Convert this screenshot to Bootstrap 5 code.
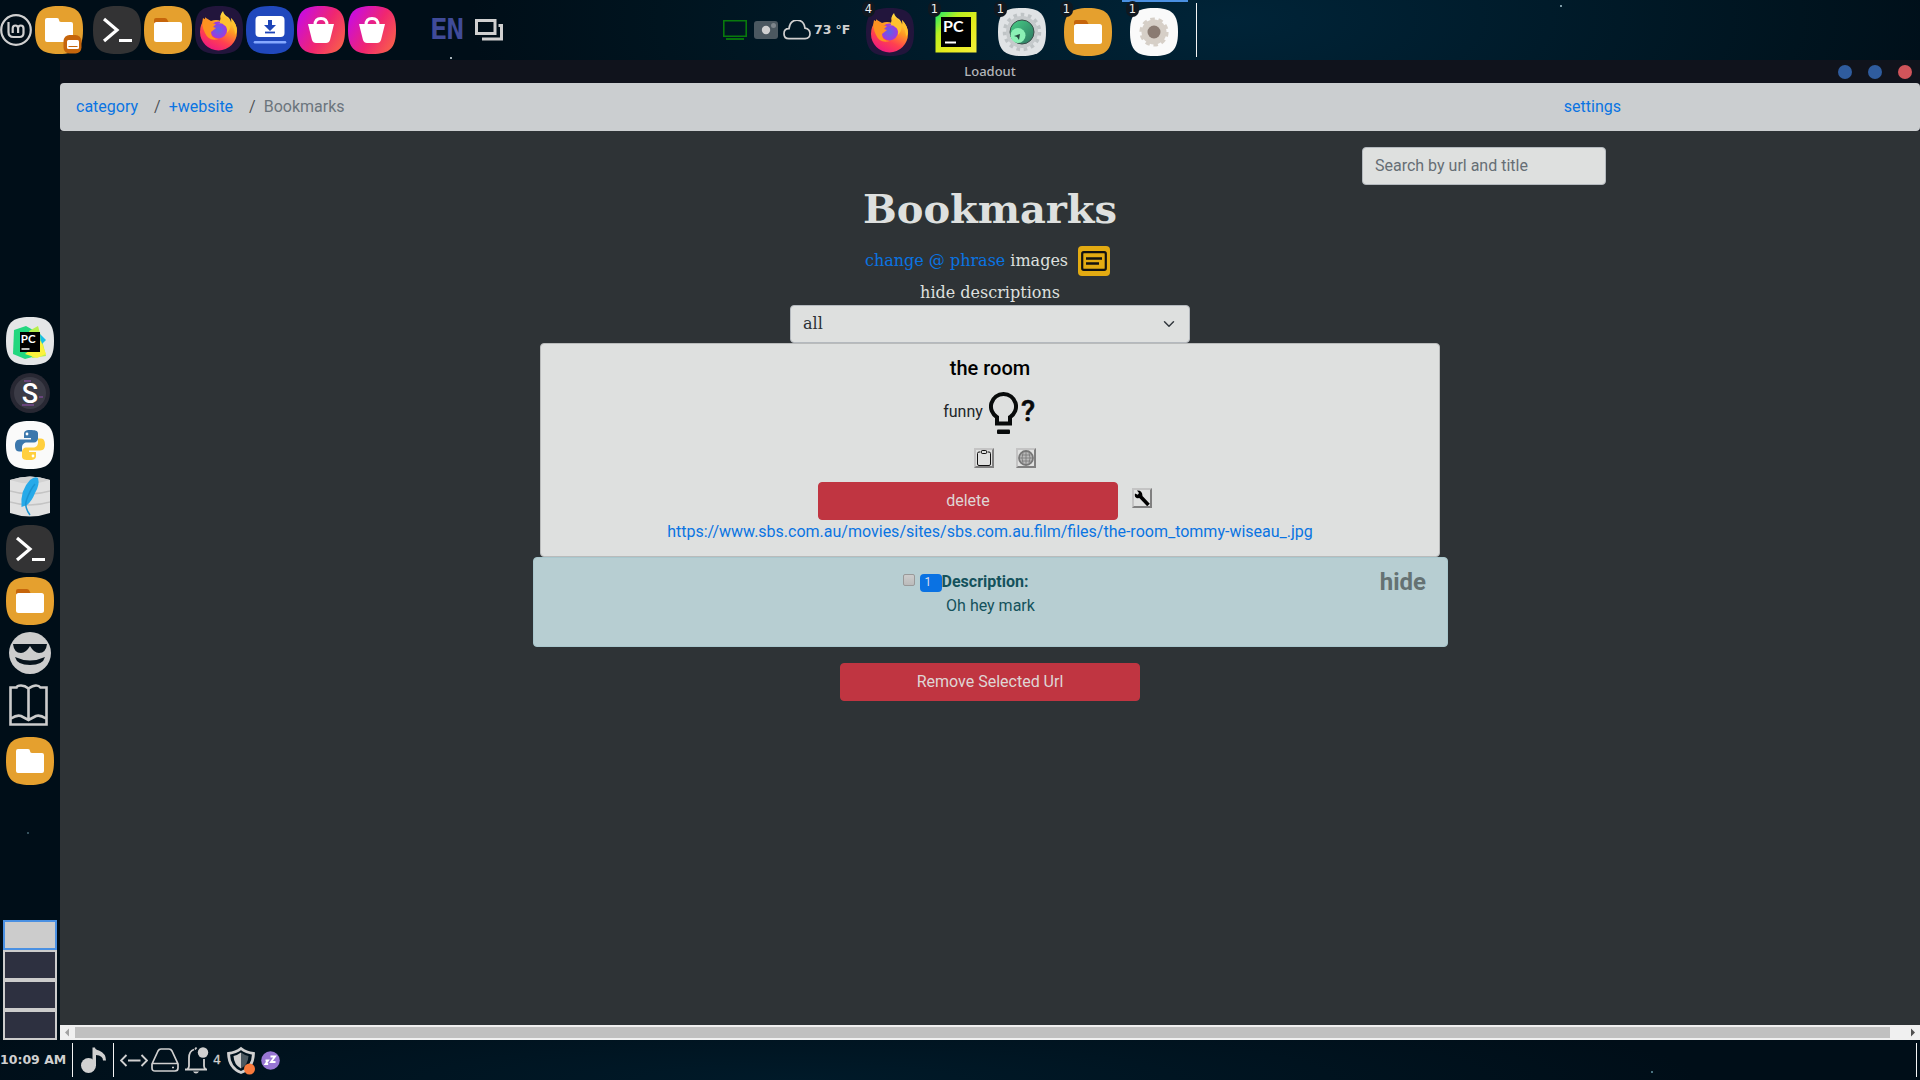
<!DOCTYPE html>
<html lang="en">
<head>
<meta charset="utf-8">
<title>Loadout</title>
<link href="https://cdn.jsdelivr.net/npm/bootstrap@5.3.0/dist/css/bootstrap.min.css" rel="stylesheet">
<style>
body{width:1920px;height:1080px;overflow:hidden;font-family:Roboto,"Liberation Sans",sans-serif;color:#212529}
svg{display:block;flex:none}
.desktop{height:1080px;background:
  radial-gradient(circle at 451px 58px,#a8b4ba 0 1px,transparent 1.5px),
  radial-gradient(circle at 1561px 6px,#7d9aa6 0 1px,transparent 1.5px),
  radial-gradient(circle at 1652px 1072px,#4a7482 0 1px,transparent 1.5px),
  radial-gradient(circle at 28px 833px,#34505c 0 1px,transparent 1.5px),
  radial-gradient(ellipse 760px 260px at 1230px 20px,#002438,#00141f 75%,rgba(0,14,23,0) 100%),
  radial-gradient(ellipse 900px 90px at 800px 1080px,#001a29,#000e18)}
.panel-top{height:60px}
.panel-bottom{height:40px}
.sidebar{width:60px}
.panel-text{font:bold 12.5px/16px "DejaVu Sans",sans-serif;color:#d0d0d0;white-space:nowrap}
.divider{width:1px;background:#f4f4f4;flex:none}
.lang{font:bold 29px/34px "DejaVu Sans Mono",monospace;color:#404b99;letter-spacing:-1px;width:43px}
.task{width:66px;padding-top:8px;height:60px}
.task.active{box-shadow:inset 0 2px #4a90e2}
.count{left:4px;top:1px;width:13px;height:16px;border-radius:7px;background:#101820;color:#eee;font:11.5px/16px "DejaVu Sans",sans-serif;text-align:center}
.win{width:1860px}
.titlebar{height:23px;background:#10131c;color:#b4b6ba;font:500 13px/25px "Noto Sans",sans-serif}
.dot{width:14px;height:14px;border-radius:50%;background:#2f5c9e}
.dot-close{background:#d0545a}
.page{background:#2e3336}
.crumbs{height:48px;background:#cbced0;border-radius:4px;margin:0;padding:12px 0 12px 16px;--bs-breadcrumb-divider-color:#6c757d}
.crumbs .breadcrumb-item+.breadcrumb-item{padding-left:16px;color:#6c757d}
.page a{color:#0a74e2;text-decoration:none}
.search{width:244px;height:38px;background:#dee0df;border-color:#b4b9be;border-radius:4px;padding-top:5px;padding-bottom:7px}
.search::placeholder{color:#666e75}
.serif{font-family:"DejaVu Serif",serif;color:#dee0df}
.headline{font-size:40px;line-height:48px;font-weight:700;letter-spacing:-.05px}
.links-row{height:40px}
.btn-note{width:32px;height:30px;background:#e3ab12;border-radius:4px;margin-left:11px;margin-right:5px}
.picker{width:400px;height:38px;background-color:#dee0df;border-color:#b4b9be;border-radius:4px;color:#2b3035;font-family:"DejaVu Serif",serif;font-size:16px}
.entry{width:900px;height:214px;background:#dee0df;border-color:#b9bbbb;border-radius:4px;padding-top:12px}
.idea{height:50px;gap:6px}
.tool{width:20px;height:20px;border:2px solid;border-color:#c4c4c4 #808080 #808080 #c4c4c4;background:#e0e1e0;padding:0}
.btn-red{width:300px;height:38px;background:#c03541;border-color:#c03541;color:#dfd5d5;border-radius:4px}
.desc{width:915px;height:90px;background:#b7ced2;border:1px solid #a8c7cd;border-radius:4px;color:#14525c;padding:8px 16px 0;margin:0 0 16px 1px}
.desc input{width:12px;height:12px;appearance:none;border:1px solid #999;border-radius:2px;background:linear-gradient(#ccc,#bbb)}
.num{width:22px;height:18px;background:#0a72e3;border-radius:4px;font-weight:400;font-size:12px;line-height:17px;padding:0 0 0 5px;text-align:left;color:#dde}
.hide-x{right:21px;top:12px;font-size:24px;line-height:24px;font-weight:700;color:#657273}
.scroller{height:15px;background:#f0f0f0}
.thumb{width:1815px;height:11px;background:#c0c0c0}
.ws{width:54px;height:30px;border:2px solid #ccc;background:#2d3040}
.ws.on{background:#ccc;border-color:#4a90e2}
</style>
<script src="https://cdn.jsdelivr.net/npm/bootstrap@5.3.0/dist/js/bootstrap.bundle.min.js"></script>
</head>
<body>
<svg width="0" height="0" class="position-absolute">
<defs>
<linearGradient id="pink" x1="0" y1=".2" x2="1" y2=".8"><stop offset="0" stop-color="#c70be6"/><stop offset=".55" stop-color="#f02670"/><stop offset="1" stop-color="#f8604a"/></linearGradient>
<linearGradient id="fox" x1=".8" y1="0" x2=".3" y2="1"><stop offset="0" stop-color="#fff04a"/><stop offset=".4" stop-color="#ff9a22"/><stop offset=".7" stop-color="#ff4050"/><stop offset="1" stop-color="#ee1784"/></linearGradient>
<radialGradient id="violet"><stop offset="0" stop-color="#5a64e8"/><stop offset="1" stop-color="#a337dd"/></radialGradient>
<linearGradient id="pcg" x1="0" y1="0" x2="1" y2="1"><stop offset="0" stop-color="#14e86a"/><stop offset=".3" stop-color="#b8f020"/><stop offset=".6" stop-color="#e6ec1c"/><stop offset="1" stop-color="#f4f03a"/></linearGradient>
<linearGradient id="grn" x1="0" y1="0" x2="1" y2="1"><stop offset="0" stop-color="#48d086"/><stop offset="1" stop-color="#2c7460"/></linearGradient>
<symbol id="sq" viewBox="0 0 48 48"><path d="M24 0C42 0 48 6 48 24S42 48 24 48 0 42 0 24 6 0 24 0Z"/></symbol>
<symbol id="folder" viewBox="0 0 48 48"><use href="#sq" fill="#e5a02e"/><path d="M10 17v-3q0-2 2-2h9q2 0 3 3l1 2Z" fill="#c6650b"/><rect x="10" y="16" width="28" height="20" rx="2.500" fill="#fff"/></symbol>
<symbol id="home" viewBox="0 0 48 48"><use href="#sq" fill="#e5a02e"/><path d="M10 14q0-2 2-2h10q2 0 2 2 0 2 2 2h10q2 0 2 2v16q0 2-2 2H12q-2 0-2-2Z" fill="#fff"/></symbol>
<symbol id="term" viewBox="0 0 48 48"><use href="#sq" fill="#333334"/><path d="m11 13 13 11-13 11" fill="none" stroke="#fff" stroke-width="3.200"/><path d="M26 34.500h13" stroke="#fff" stroke-width="3"/></symbol>
<symbol id="firefox" viewBox="0 0 48 48"><use href="#sq" fill="#22153c"/><path d="M28 5q1 4 5 6c2 2 3 4 3 6q1-2 0-5 6 6 6 14a18.500 18.500 0 0 1-37 0q0-8 5-13 0-3 1-1l5 3q5-2 10 0-2-6 2-10Z" fill="url(#fox)"/><circle cx="23.500" cy="24" r="8.500" fill="url(#violet)"/><path d="m8 12 8 5 5 1-3 3 3 1-5 4q0 7 8 7-10 3-14-6-4-8-2-15Z" fill="#ff9220"/><path d="M22 18q5-2 7 1 4 2 3 8 5-5 3-11 5 6 5 13l2-4q0-7-6-13 1 4 0 5Q34 12 29 10q-5 3-4 7Z" fill="#ffc12e"/></symbol>
<symbol id="down" viewBox="0 0 48 48"><use href="#sq" fill="#2048bd"/><rect x="9.500" y="10" width="29" height="21" rx="4" fill="#fff"/><path d="M22 14h4v5h4l-6 6-6-6h4Z" fill="#1d45b8"/><path d="M19 26.500h10" stroke="#1d45b8" stroke-width="1.800"/><path d="M9 36.300h30" stroke="#86a9ff" stroke-width="2.600" stroke-linecap="round"/></symbol>
<symbol id="bag" viewBox="0 0 48 48"><use href="#sq" fill="url(#pink)"/><path d="M11 18h26l-4 16q-1 3-4 3H19q-3 0-4-3Z" fill="#fff"/><path d="M18 19q0-6.500 6-6.500t6 6.500" fill="none" stroke="#fff" stroke-width="3"/></symbol>
<symbol id="webgear" viewBox="0 0 48 48"><use href="#sq" fill="#e0e3e5"/><circle cx="24" cy="24" r="16" fill="#c6cacc"/><circle cx="24" cy="24" r="17.500" fill="none" stroke="#bfc4c6" stroke-width="3.500" stroke-dasharray="3.600 3.730"/><circle cx="24" cy="24" r="12" fill="url(#grn)" stroke="#3a4b48"/><circle cx="20" cy="27.500" r="7.500" fill="#8bf0b5"/><path d="m16 28 6-2-1 6-2-3Z" fill="#24493e"/></symbol>
<symbol id="gear" viewBox="0 0 48 48"><use href="#sq" fill="#fafafa"/><circle cx="24" cy="24" r="12.500" fill="#d6cfc7"/><circle cx="24" cy="24" r="13" fill="none" stroke="#d6cfc7" stroke-width="3.200" stroke-dasharray="4.500 3.668"/><circle cx="24" cy="24" r="6.500" fill="#8a7b72"/></symbol>
</defs>
</svg>
<div class="desktop d-flex flex-column">
  <header class="panel-top d-flex flex-shrink-0">
    <div class="d-flex pt-1" style="width:720px">
      <svg class="mt-2" width="35" height="36" viewBox="0 0 35 36" fill="none" stroke="#d0d0d0"><circle cx="16" cy="18" r="14.800" stroke-width="2.200"/><path d="M8.500 10v10q0 5 5 5h6q4 0 4-4v-4.500q0-3-2.700-3t-2.700 3V21m0-4.500q0-3-2.700-3t-2.700 3V21" stroke-width="2.200"/></svg>
      <svg width="48" height="52" viewBox="0 -2 48 52"><use href="#home" width="48" height="48"/><rect x="28.500" y="29" width="18" height="18.500" rx="6" fill="#c6650b"/><rect x="32" y="34" width="12" height="9" rx="1.500" fill="#fff"/><path d="M33.500 40.500h9" stroke="#c6650b"/></svg>
      <div class="d-flex" style="margin-left:10px;gap:3px;margin-top:2px">
        <svg width="48" height="48"><use href="#term"/></svg>
        <svg width="48" height="48"><use href="#folder"/></svg>
        <svg width="48" height="48"><use href="#firefox"/></svg>
        <svg width="48" height="48"><use href="#down"/></svg>
        <svg width="48" height="48"><use href="#bag"/></svg>
        <svg width="48" height="48"><use href="#bag"/></svg>
      </div>
      <div class="lang" style="margin:8px 0 0 34px">EN</div>
      <svg style="margin:15px 0 0 2px" width="28" height="22" fill="none" stroke="#d0d0d0" stroke-width="3"><path d="M1.500 1.500h18.500v13H1.500Z"/><path d="M23.500 6.500h3v13.500H7"/></svg>
    </div>
    <div class="d-flex align-items-center" style="width:138px">
      <svg style="margin-left:3px" width="24" height="20" viewBox="0 0 24 20"><path d="M.8.800h22.400v15.400H.8Z" fill="none" stroke="#087a0c" stroke-width="1.600"/><path d="M3 19h18" stroke="#087a0c" stroke-width="1.800"/></svg>
      <svg style="margin-left:7px" width="24" height="18"><rect width="24" height="18" rx="3" fill="#4b5860"/><circle cx="12" cy="9" r="4.200" fill="#d0d0d0"/><circle cx="19.500" cy="4.500" r="2.500" fill="#7d868c"/></svg>
      <svg style="margin-left:5px" width="28" height="21" viewBox="0 0 28 21"><path d="M6 19.500q-5 0-5-5t5-5Q7 1 14 1t8 8q5 1 5 5.500t-5 5Z" fill="none" stroke="#d0d0d0" stroke-width="1.700" transform="translate(0 -.8)"/></svg>
      <span class="panel-text" style="margin-left:3px;letter-spacing:-.05px">73 °F</span>
    </div>
    <div class="d-flex">
      <div class="task position-relative"><svg class="ms-2" width="48" height="48"><use href="#firefox"/></svg><span class="count position-absolute">4</span></div>
      <div class="task position-relative"><svg class="ms-2" width="48" height="48"><rect x="3.500" y="4" width="41" height="40.500" fill="url(#pcg)"/><rect x="9" y="9" width="30" height="30" fill="#000"/><text x="11" y="24" font-family="Lato" font-weight="700" font-size="16" fill="#fff">PC</text><path d="M13 34.500h11" stroke="#fff" stroke-width="2"/></svg><span class="count position-absolute">1</span></div>
      <div class="task position-relative"><svg class="ms-2" width="48" height="48"><use href="#webgear"/></svg><span class="count position-absolute">1</span></div>
      <div class="task position-relative"><svg class="ms-2" width="48" height="48"><use href="#folder"/></svg><span class="count position-absolute">1</span></div>
      <div class="task active position-relative"><svg class="ms-2" width="48" height="48"><use href="#gear"/></svg><span class="count position-absolute">1</span></div>
      <div class="divider" style="margin:3px 0 3px 8px"></div>
    </div>
  </header>

  <div class="d-flex flex-grow-1">
    <aside class="sidebar d-flex flex-column justify-content-between">
      <div class="d-flex flex-column align-items-center" style="padding-top:257px">
        <svg width="48" height="48"><use href="#sq" fill="#e4e6e7"/><path d="m8 13 12-4 14 8-4 22-11 3-12-5Z" fill="#22d77f"/><path d="m23 14 9-5 4 14 4 16-14 2Z" fill="#b8f04a"/><path d="m34 17 6 6-5 5Z" fill="#18bfe6"/><path d="m35 24 5 13-9 4-12-4Z" fill="#fbf23c"/><rect x="14" y="15" width="20" height="20"/><text x="14.800" y="26" font-family="Lato" font-weight="700" font-size="11.500" fill="#fff">PC</text><path d="M15.500 32h8" stroke="#fff" stroke-width="1.500"/></svg>
        <svg style="margin-top:8px" width="40" height="40"><circle cx="20" cy="20" r="20" fill="#282833"/><circle cx="20" cy="20" r="16" fill="#3b3b46"/><path d="M14 8h7M29 24h4M12 32h12" stroke="#69457c" stroke-width="2"/><text x="20" y="30" text-anchor="middle" font-family="Roboto" font-weight="500" font-size="27" fill="#fff">S</text></svg>
        <svg style="margin-top:8px" width="48" height="48"><use href="#sq" fill="#fafafa"/><path d="M24 9c-5 0-6 2-6 4v4h7v1.500H14c-4 0-5 3-5 6s1 6 4 6h3v-4c0-3 2-5 5-5h7c2 0 4-2 4-4v-5c0-3-3-3.500-8-3.500Z" fill="#3c78ad"/><circle cx="21" cy="13" r="1.400" fill="#fff"/><path d="M24 39c5 0 6-2 6-4v-4h-7v-1.500h11c4 0 5-3 5-6s-1-6-4-6h-3v4c0 3-2 5-5 5h-7c-2 0-4 2-4 4v5c0 3 3 3.500 8 3.500Z" fill="#ffcf3e"/><circle cx="27" cy="35" r="1.400" fill="#fff"/></svg>
        <svg style="margin-top:7px" width="40" height="41"><path d="M0 4Q20-3 40 4v33q-20 7-40 0Z" fill="#e1e1e1"/><path d="M0 4q20-7 40 0-20 7-40 0Z" fill="#d2d2d2"/><path d="M0 15q20 6 40 0M0 26q20 6 40 0" fill="none" stroke="#c4c4c4" stroke-width="1.500"/><path d="M11.500 31Q10 14 20 4q5-4 8-2 2 7-3 15-3 8-8 12Z" fill="#27aae9"/><path d="M20 39Q14 31 16.500 24 20 14 25 8" fill="none" stroke="#1c94d2" stroke-width="1.500"/></svg>
        <svg style="margin-top:8px" width="48" height="48"><use href="#term"/></svg>
        <svg style="margin-top:4px" width="48" height="48"><use href="#folder"/></svg>
        <svg style="margin-top:7px" width="42" height="42"><circle cx="21" cy="21" r="21" fill="#ccc"/><path d="M4 12h34q-1 9-8 9-5 0-9-7-4 7-9 7-7 0-8-9ZM6 25q15 7 30 0-2 8-15 8T6 25Z" fill="#07131c"/></svg>
        <svg style="margin:10px 3px 0 0" width="39" height="42" fill="none" stroke="#ccc" stroke-width="2.600"><path d="M19.500 4.500Q16 1.500 12 1.500T7.500 3.500H1.500v37h36v-37h-6Q30 1.500 27 1.500t-7.500 3v30M2 34.500q6-4 10-2.500l7.500 4 7.500-4q4-1.500 10 2.500"/></svg>
        <svg style="margin-top:11px" width="48" height="48"><use href="#home"/></svg>
      </div>
      <div class="d-flex flex-column align-items-center"><div class="ws on"></div><div class="ws"></div><div class="ws"></div><div class="ws"></div></div>
    </aside>

    <section class="win d-flex flex-column page">
      <div class="titlebar d-flex justify-content-end align-items-center position-relative">
        <div class="position-absolute start-0 end-0 text-center">Loadout</div>
        <div class="d-flex" style="gap:16px;margin-right:8px"><i class="dot"></i><i class="dot"></i><i class="dot dot-close"></i></div>
      </div>
      <div style="background:#10131c"><nav class="crumbs d-flex justify-content-between">
        <ol class="breadcrumb m-0">
          <li class="breadcrumb-item"><a href="#">category</a></li>
          <li class="breadcrumb-item"><a href="#">+website</a></li>
          <li class="breadcrumb-item">Bookmarks</li>
        </ol>
        <a href="#" style="margin-right:299px">settings</a>
      </nav></div>
      <main class="flex-grow-1 d-flex flex-column align-items-center pt-3">
        <div class="w-100 d-flex justify-content-end" style="padding-right:314px"><input class="form-control search" placeholder="Search by url and title"></div>
        <h1 class="serif headline mb-2">Bookmarks</h1>
        <div class="serif links-row d-flex align-items-center"><a href="#">change @ phrase</a><span style="margin-left:5px;margin-right:-1px">images</span>
          <span class="btn-note d-flex align-items-center justify-content-center"><svg width="26" height="20" fill="none" stroke="#111"><rect x="1.200" y="1.200" width="23.600" height="17.600" rx="1.500" stroke-width="2.200"/><path d="M5 7.500h16M5 12.500h13" stroke-width="2.400"/></svg></span></div>
        <div class="serif">hide descriptions</div>
        <select class="form-select picker"><option>all</option></select>
        <article class="card entry align-items-center">
          <h5 class="mb-2 text-black" style="line-height:24px">the room</h5>
          <div class="idea d-flex align-items-center"><span style="margin-top:-2px">funny</span>
            <svg width="48" height="42"><path d="M14.500 2A12.500 12.500 0 0 0 8 25.200V31.500H21V25.200A12.500 12.500 0 0 0 14.500 2Z" fill="none" stroke="#080b0b" stroke-width="4"/><rect x="8" y="37.500" width="13" height="4.500" rx="1" fill="#080b0b"/><text x="39" y="28.500" text-anchor="middle" font-family="Roboto" font-weight="500" font-size="29" fill="#080b0b" stroke="#080b0b" stroke-width=".5">?</text></svg></div>
          <div class="d-flex" style="gap:22px;margin:10px 0 14px 30px">
            <button class="tool"><svg width="16" height="16" fill="none" stroke="#111"><path d="M4.500 2H3Q1.500 2 1.500 3.500v10.500Q1.500 15.500 3 15.500h10q1.500 0 1.500-1.500V3.500Q14.500 2 13 2h-1.500"/><rect x="5.500" y=".5" width="5" height="3" rx=".7"/></svg></button>
            <button class="tool"><svg width="16" height="16" fill="none" stroke="#777"><circle cx="8" cy="8" r="7" stroke-width="1.800" fill="#bbb"/><path d="M8 2v12M2 8h12M3.500 5h9M3.500 11h9M5 3q-2 5 0 10M11 3q2 5 0 10" stroke-width=".8"/></svg></button>
          </div>
          <div class="d-flex" style="gap:14px;margin-right:10px"><button class="btn btn-danger btn-red">delete</button>
            <button class="tool" style="margin-top:6px"><svg width="16" height="16"><path d="m5.500 5.500 9 9.500" stroke="#000" stroke-width="3.600"/><path d="M3 .5 5 3 3.800 4.700 1 3.500Q0 7 3 8.300l3.500-.3 2-2.500Q8 0 3 .5Z"/></svg></button></div>
          <a href="#">https://www.sbs.com.au/movies/sites/sbs.com.au.film/files/the-room_tommy-wiseau_.jpg</a>
        </article>
        <div class="alert desc position-relative">
          <div class="d-flex justify-content-center" style="margin:9px 50px 0 0"><input type="checkbox" style="margin:-1px 5px 0 0"><span class="badge num" style="margin-top:-1px">1</span><b style="line-height:24px;margin-top:-5px">Description:</b></div>
          <div class="text-center">Oh hey mark</div>
          <div class="hide-x position-absolute">hide</div>
        </div>
        <button class="btn btn-danger btn-red">Remove Selected Url</button>
      </main>
      <div class="scroller d-flex align-items-center"><svg width="15" height="15"><path d="M5 7.500 9 3.500v8Z" fill="#a3a3a3"/></svg><div class="thumb"></div><svg class="ms-auto" width="15" height="15"><path d="M10 7.500 6 3.500v8Z" fill="#505050"/></svg></div>
    </section>
  </div>

  <footer class="panel-bottom d-flex align-items-center flex-shrink-0">
    <span class="panel-text" style="width:72px">10:09 AM</span>
    <div class="divider" style="height:34px"></div>
    <svg style="margin-left:7px" width="27" height="28"><circle cx="8.500" cy="19.500" r="7.500" fill="#d0d0d0"/><path d="M12.500 20V1.500h2.500q0 2 4 3 7 3 7 10h-3q0-5-7-5.500V20Z" fill="#d0d0d0"/></svg>
    <div class="divider" style="height:34px;margin-left:6px"></div>
    <svg style="margin-left:6px" width="28" height="13" fill="none" stroke="#d0d0d0" stroke-width="1.900"><path d="M6.500 1 1 6.500 6.500 12M21.500 1 27 6.500 21.500 12M8 6.500h12.500"/></svg>
    <svg style="margin-left:3px" width="28" height="24" fill="none" stroke="#d0d0d0" stroke-width="1.700"><path d="m1 16 6-13q1-2 3-2h8q2 0 3 2l6 13v4q0 3-3 3H4q-3 0-3-3ZM1 15.500h26"/><path d="M21 19.500h2"/></svg>
    <svg style="margin-left:5px" width="26" height="28" viewBox="0 -1 26 28"><path d="M1 22.500h22M3.500 22q1.500-1 1.500-3v-8q0-7 5-8.500M20 12v7q0 2 1.500 3M11 2.500 12.500.500" fill="none" stroke="#d0d0d0" stroke-width="1.800"/><path d="M9 24.500h6q-1 2-3 2t-3-2Z" fill="#d0d0d0"/><circle cx="19" cy="5.500" r="5.200" fill="#d0d0d0"/></svg>
    <span class="panel-text" style="margin-left:3px;width:14px;font-weight:500;-webkit-text-stroke:.3px #d0d0d0">4</span>
    <svg width="29" height="29"><path d="M14 2.500q5 4 12.500 5Q26 22 14 26.500 2 22 1.500 7.500 9 6.500 14 2.500Z" fill="none" stroke="#d0d0d0" stroke-width="2.800"/><path d="M14 6.500v16Q7 19 6.500 10 10 9.500 14 6.500Z" fill="#d0d0d0"/><path d="M14 6.500v16Q21 19 21.500 10 18 9.500 14 6.500Z" fill="#4b5860"/><circle cx="22.500" cy="23" r="5.500" fill="#f97a3c"/></svg>
    <svg style="margin-left:5px" width="19" height="19"><circle cx="9.500" cy="9.500" r="9.300" fill="#9876d3"/><path d="M4.500 9.500H7L4.500 13H7.200M9.500 5.500H14L10 11h4.500" fill="none" stroke="#fff" stroke-width="1.900"/></svg>
    <div class="divider ms-auto" style="height:34px;margin-right:3px"></div>
  </footer>
</div>
</body>
</html>
